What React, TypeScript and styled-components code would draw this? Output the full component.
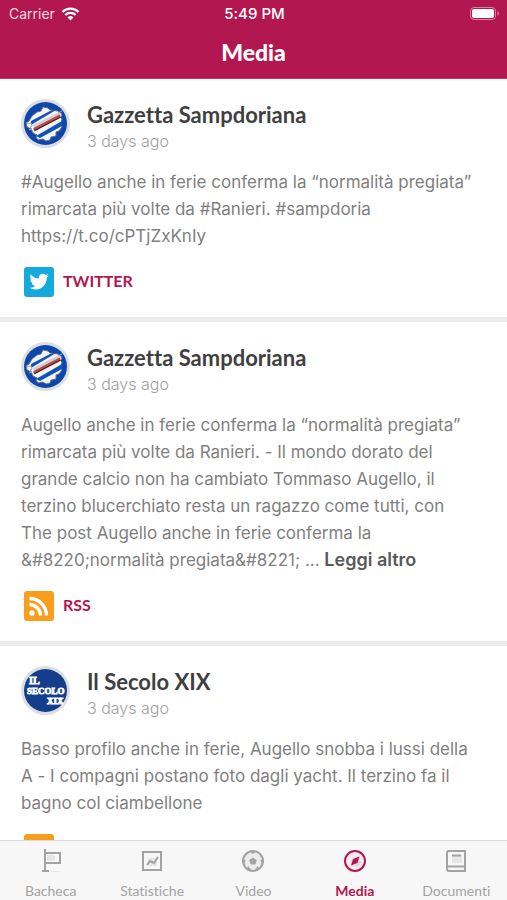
import React from 'react';
import styled, { createGlobalStyle } from 'styled-components';

const crimson = '#b3174f';

const GlobalStyle = createGlobalStyle`
  * { box-sizing: border-box; }
  body {
    margin: 0;
    background: #fff;
    font-family: Inter, "Liberation Sans", sans-serif;
    font-variant-ligatures: none;
  }
  button { border: 0; padding: 0; background: none; font: inherit; cursor: pointer; }
`;

const Screen = styled.div`
  display: flex;
  flex-direction: column;
  height: 100vh;
`;

const Header = styled.header`
  flex: none;
  background: ${crimson};
  color: #fff;
  border-bottom: 1px solid #c4326a;
`;

const StatusBar = styled.div`
  display: grid;
  grid-template-columns: 1fr auto 1fr;
  align-items: center;
  height: 27px;
  padding: 0 7px 0 9px;
  font-size: 14px;
`;

const Carrier = styled.div`
  display: flex;
  align-items: center;
  gap: 6px;
  color: #f6dbe5;
  svg { width: 19px; height: 14px; }
`;

const Clock = styled.time`
  font-size: 15px;
  font-weight: 500;
`;

const BatteryIcon = styled.svg`
  justify-self: end;
  width: 30px;
  height: 15px;
`;

const Title = styled.h1`
  margin: 0;
  height: 51px;
  line-height: 50px;
  text-align: center;
  font-family: Lato, sans-serif;
  font-weight: 900;
  font-size: 23px;
`;

const Feed = styled.main`
  flex: 1;
  min-height: 0;
  overflow-y: auto;
  scrollbar-width: none;
`;

const Post = styled.article`
  padding: 20px 28px 20px 21px;
  border-bottom: 5px solid #ebebeb;
`;

const PostHead = styled.div`
  display: flex;
  align-items: flex-start;
  gap: 17px;
`;

const Byline = styled.div`
  padding-top: 2px;
`;

const Avatar = styled.svg`
  flex: none;
  width: 49px;
  height: 49px;
`;

const Name = styled.h2`
  margin: 0;
  font-family: Lato, sans-serif;
  font-weight: 700;
  font-size: 22px;
  line-height: 28px;
  color: #3f3f41;
`;

const Age = styled.div`
  font-size: 16px;
  line-height: 24px;
  font-weight: 300;
  color: #a0a0a2;
`;

const Body = styled.p`
  margin: 16px 0 17px;
  font-size: 17px;
  line-height: 27px;
  color: #7f7f81;
`;

const More = styled.a`
  font-size: 18px;
  line-height: 24px;
  font-weight: 600;
  color: #58585a;
  text-decoration: none;
`;

const Source = styled.a`
  display: flex;
  align-items: center;
  gap: 9px;
  margin-left: 3px;
  width: fit-content;
  color: ${crimson};
  font-family: Lato, sans-serif;
  font-weight: 700;
  font-size: 16px;
  text-decoration: none;
  svg { width: 30px; height: 30px; }
`;

const SourceName = styled.span`
  padding-bottom: 3px;
`;

const Tabs = styled.nav`
  flex: none;
  display: grid;
  grid-template-columns: repeat(5, 1fr);
  height: 60px;
  background: #f7f7f7;
  border-top: 1px solid #dcdcdc;
`;

const Tab = styled.button<{ $active?: boolean }>`
  display: flex;
  flex-direction: column;
  align-items: center;
  gap: 8px;
  padding-top: 8px;
  color: ${p => (p.$active ? crimson : '#a3a3a3')};
  font-family: Lato, sans-serif;
  font-size: 14px;
  line-height: 20px;
  font-weight: ${p => (p.$active ? 700 : 400)};
  svg { width: 24px; height: 24px; }
`;

const SampAvatar = () => (
  <Avatar viewBox="0 0 49 49" role="img" aria-label="Gazzetta Sampdoriana">
    <circle cx="24.5" cy="24.5" r="24.5" fill="#dcdee0" />
    <circle cx="24.5" cy="24.5" r="21.5" fill="#0d47ad" />
    <path
      d="M11 17l5-4 4-1 2-4 5 1 2 2 8 1 4 3-2 3 2 2-1 4 1 4-3 4-3 1 0 4-5 1-1 3-4 1-3-2-5 1-2-3 1-2-4-2-2-4-4-2-1-4 3-2z"
      fill="#f4f5f7" stroke="#66707e" strokeWidth="1"
    />
    <path d="M10 22L29 12l6-1L10 26z" fill="#1352bb" />
    <path d="M15 37L41 22l0 5L19 39z" fill="#1352bb" />
    <path d="M12 26L38 13l3 4L14 32z" fill="#cfd1d6" />
    <path d="M13 31L39 17.5" stroke="#3a2730" strokeWidth="3" />
    <path d="M13 30L39 16.5" stroke="#cf4438" strokeWidth="2" />
    <path d="M6 25l4-1 1 3-2 1 2 2-3 1M37 14l4-2" stroke="#9fabb8" strokeWidth="1" fill="none" />
  </Avatar>
);

const SecoloAvatar = () => (
  <Avatar viewBox="0 0 49 49" role="img" aria-label="Il Secolo XIX">
    <circle cx="24.5" cy="24.5" r="24.5" fill="#dcdee0" />
    <circle cx="24.5" cy="24.5" r="21.5" fill="#143d8b" />
    <g fill="#fff" stroke="#fff" strokeWidth="0.8" fontFamily="Liberation Serif, serif" fontWeight="700">
      <text x="8" y="18" fontSize="10">IL</text>
      <text x="6" y="28" fontSize="9">SECOLO</text>
      <text x="26" y="38" fontSize="9">XIX</text>
    </g>
  </Avatar>
);

const TwitterIcon = () => (
  <svg viewBox="0 0 30 30" aria-hidden="true">
    <rect width="30" height="30" rx="3" fill="#15a9dc" />
    <path
      transform="translate(5.5 5) scale(0.8)"
      fill="#fff"
      d="M23.95 4.57a10 10 0 0 1-2.82.78 4.96 4.96 0 0 0 2.16-2.73c-.95.56-2 .96-3.13 1.18a4.92 4.92 0 0 0-8.38 4.48C7.69 8.1 4.07 6.13 1.64 3.16a4.82 4.82 0 0 0-.67 2.48c0 1.71.87 3.21 2.19 4.1a4.9 4.9 0 0 1-2.23-.62v.06a4.92 4.92 0 0 0 3.95 4.83 5 5 0 0 1-2.21.08 4.94 4.94 0 0 0 4.6 3.42A9.87 9.87 0 0 1 0 19.54a14 14 0 0 0 7.55 2.21c9.05 0 14-7.5 14-13.98 0-.21 0-.42-.02-.63a9.94 9.94 0 0 0 2.42-2.57z"
    />
  </svg>
);

const RssIcon = () => (
  <svg viewBox="0 0 30 30" aria-hidden="true">
    <rect width="30" height="30" rx="3" fill="#f99d1c" />
    <circle cx="8" cy="22" r="2.7" fill="#fff" />
    <path d="M5.5 13.5A11 11 0 0 1 16.5 24.500M5.5 7.500A17 17 0 0 1 22.5 24.500" stroke="#fff" strokeWidth="3.4" fill="none" />
  </svg>
);

const FlagIcon = () => (
  <svg viewBox="0 0 24 24" fill="none" stroke="currentColor" strokeWidth="2" aria-hidden="true">
    <path d="M8 6h8v6H8z" fill="#e6e6e6" stroke="none" />
    <path d="M6 0v22M3 22h7M6 4h15v10H6" />
    <path d="M12 22.500h9" stroke="#e9e9e9" strokeWidth="1" />
  </svg>
);

const ChartIcon = () => (
  <svg viewBox="0 0 24 24" fill="none" stroke="currentColor" strokeWidth="2" aria-hidden="true">
    <path d="M3 3h18v18H3z" />
    <path d="M8 9h9v8H8z" fill="#e6e6e6" stroke="none" />
    <path d="M7 16l3-4 4 2 4-6" />
  </svg>
);

const BallIcon = () => (
  <svg viewBox="0 0 24 24" aria-hidden="true">
    <circle cx="12" cy="12" r="10" fill="#ececec" stroke="currentColor" strokeWidth="2" />
    <path d="M12 8.500l3.800 2.700-1.500 4.300H9.700l-1.500-4.300z" fill="currentColor" />
    <path d="M8.500 2.500L12 5l3.500-2.500zM2 9.500l2.500 2-1.500 4.500zM22 9.500l-2.500 2 1.500 4.500zM6 20.500l1-3.500 3.500 4zM18 20.500l-1-3.500-3.500 4z" fill="currentColor" />
  </svg>
);

const CompassIcon = () => (
  <svg viewBox="0 0 24 24" aria-hidden="true">
    <circle cx="12" cy="12" r="10" fill="#fbeaf0" stroke="currentColor" strokeWidth="2" />
    <path d="M12 17a6 6 0 0 0 5-5" fill="none" stroke="#f1cbd9" strokeWidth="2" />
    <path d="M16.500 7.500l-2 6.500-6.500 2.500 2-6.500z" fill="currentColor" />
  </svg>
);

const BookIcon = () => (
  <svg viewBox="0 0 24 24" fill="none" stroke="currentColor" strokeWidth="2" aria-hidden="true">
    <path d="M5 2h16v20H5a2 2 0 0 1-2-2V4a2 2 0 0 1 2-2z" />
    <path d="M8 6h10v8H8z" fill="#e6e6e6" stroke="none" />
    <path d="M8 6.500h9M4 17.500h17" />
  </svg>
);

const WifiIcon = () => (
  <svg viewBox="0 0 19 14" aria-hidden="true">
    <path d="M1.500 5a11.400 11.400 0 0 1 16 0M4.300 8a7.400 7.400 0 0 1 10.400 0" fill="none" stroke="#fff" strokeWidth="2.3" />
    <path d="M6.500 10.400a4.400 4.400 0 0 1 6 0l-3 3.200z" fill="#fff" />
  </svg>
);

interface PostData {
  name: string;
  avatar: React.ReactNode;
  body: string;
  more?: boolean;
  source: 'TWITTER' | 'RSS';
}

const posts: PostData[] = [
  {
    name: 'Gazzetta Sampdoriana',
    avatar: <SampAvatar />,
    body: '#Augello anche in ferie conferma la “normalità pregiata” rimarcata più volte da #Ranieri. #sampdoria https://t.co/cPTjZxKnIy',
    source: 'TWITTER',
  },
  {
    name: 'Gazzetta Sampdoriana',
    avatar: <SampAvatar />,
    body: 'Augello anche in ferie conferma la “normalità pregiata” rimarcata più volte da Ranieri. - Il mondo dorato del grande calcio non ha cambiato Tommaso Augello, il terzino blucerchiato resta un ragazzo come tutti, con The post Augello anche in ferie conferma la &#8220;normalità pregiata&#8221; ...',
    more: true,
    source: 'RSS',
  },
  {
    name: 'Il Secolo XIX',
    avatar: <SecoloAvatar />,
    body: 'Basso profilo anche in ferie, Augello snobba i lussi della A - I compagni postano foto dagli yacht. Il terzino fa il bagno col ciambellone',
    source: 'RSS',
  },
];

const tabs = [
  { label: 'Bacheca', icon: <FlagIcon /> },
  { label: 'Statistiche', icon: <ChartIcon /> },
  { label: 'Video', icon: <BallIcon /> },
  { label: 'Media', icon: <CompassIcon /> },
  { label: 'Documenti', icon: <BookIcon /> },
];

export default function App() {
  return (
    <Screen>
      <GlobalStyle />
      <Header>
        <StatusBar>
          <Carrier>Carrier <WifiIcon /></Carrier>
          <Clock>5:49 PM</Clock>
          <BatteryIcon viewBox="0 0 30 15" role="img" aria-label="Battery full">
            <rect x="0.5" y="1.5" width="25" height="12" rx="3.5" fill="none" stroke="#d9809f" />
            <rect x="2" y="3" width="22" height="9" rx="2" fill="#fff" />
            <path d="M27.5 5a3 3 0 0 1 0 5z" fill="#d9809f" />
          </BatteryIcon>
        </StatusBar>
        <Title>Media</Title>
      </Header>
      <Feed>
        {posts.map((p, i) => (
          <Post key={i}>
            <PostHead>
              {p.avatar}
              <Byline>
                <Name>{p.name}</Name>
                <Age>3 days ago</Age>
              </Byline>
            </PostHead>
            <Body>
              {p.body}
              {p.more && <> <More href="#">Leggi altro</More></>}
            </Body>
            <Source href="#">
              {p.source === 'TWITTER' ? <TwitterIcon /> : <RssIcon />}
              <SourceName>{p.source}</SourceName>
            </Source>
          </Post>
        ))}
      </Feed>
      <Tabs>
        {tabs.map(t => (
          <Tab key={t.label} type="button" $active={t.label === 'Media'}>
            {t.icon}
            {t.label}
          </Tab>
        ))}
      </Tabs>
    </Screen>
  );
}
